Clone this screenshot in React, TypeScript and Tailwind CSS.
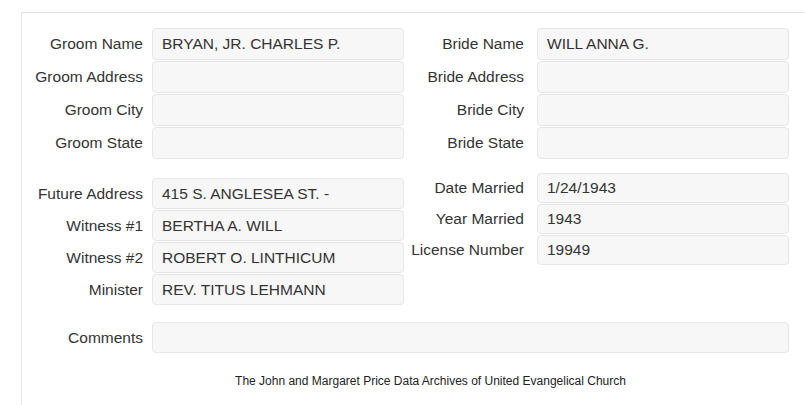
import React from 'react';

type Field = { label: string; value?: string };

const groom: Field[] = [
  { label: 'Groom Name', value: 'BRYAN, JR. CHARLES P.' },
  { label: 'Groom Address' },
  { label: 'Groom City' },
  { label: 'Groom State' },
];

const bride: Field[] = [
  { label: 'Bride Name', value: 'WILL ANNA G.' },
  { label: 'Bride Address' },
  { label: 'Bride City' },
  { label: 'Bride State' },
];

const people: Field[] = [
  { label: 'Future Address', value: '415 S. ANGLESEA ST. -' },
  { label: 'Witness #1', value: 'BERTHA A. WILL' },
  { label: 'Witness #2', value: 'ROBERT O. LINTHICUM' },
  { label: 'Minister', value: 'REV. TITUS LEHMANN' },
];

const marriage: Field[] = [
  { label: 'Date Married', value: '1/24/1943' },
  { label: 'Year Married', value: '1943' },
  { label: 'License Number', value: '19949' },
];

function Row({ field, labelW, gap, h }: { field: Field; labelW: string; gap: string; h: string }) {
  return (
    <div className={`flex items-center ${gap}`}>
      <div className={`${labelW} shrink-0 flex justify-end whitespace-nowrap`}>
        <span>{field.label}</span>
      </div>
      <div
        className={`w-[252px] ${h} flex items-center px-[9px] bg-[#f7f7f7] border border-[#e6e6e6] rounded-[4px] whitespace-nowrap`}
      >
        {field.value}
      </div>
    </div>
  );
}

export default function App() {
  return (
    <div
      className="w-[805px] h-[405px] bg-white pt-3 pl-[21px] overflow-hidden text-[#333] text-[15.5px]"
      style={{ fontFamily: '"Liberation Sans", Arial, sans-serif' }}
    >
      <div className="h-full border-l border-t border-[#e5e5e5] pt-[15px]">
        <div className="flex">
          {/* Left column */}
          <div className="flex flex-col">
            <div className="flex flex-col gap-[1px]">
              {groom.map((f) => (
                <Row key={f.label} field={f} labelW="w-[121px]" gap="gap-[9px]" h="h-[32px]" />
              ))}
            </div>
            <div className="flex flex-col gap-[1px] mt-[19px]">
              {people.map((f) => (
                <Row key={f.label} field={f} labelW="w-[121px]" gap="gap-[9px]" h="h-[31px]" />
              ))}
            </div>
          </div>

          {/* Right column */}
          <div className="flex flex-col">
            <div className="flex flex-col gap-[1px]">
              {bride.map((f) => (
                <Row key={f.label} field={f} labelW="w-[120px]" gap="gap-[13px]" h="h-[32px]" />
              ))}
            </div>
            <div className="flex flex-col gap-[1px] mt-[14px]">
              {marriage.map((f) => (
                <Row key={f.label} field={f} labelW="w-[120px]" gap="gap-[13px]" h="h-[30px]" />
              ))}
            </div>
          </div>
        </div>

        {/* Comments */}
        <div className="flex items-center gap-[9px] mt-[17px]">
          <div className="w-[121px] shrink-0 text-right">Comments</div>
          <div className="w-[637px] h-[31px] bg-[#f7f7f7] border border-[#e6e6e6] rounded-[4px]" />
        </div>

        <div className="flex justify-center pl-[34px] mt-[20px] text-[12px] leading-4 text-[#222]">
          The John and Margaret Price Data Archives of United Evangelical Church
        </div>
      </div>
    </div>
  );
}
